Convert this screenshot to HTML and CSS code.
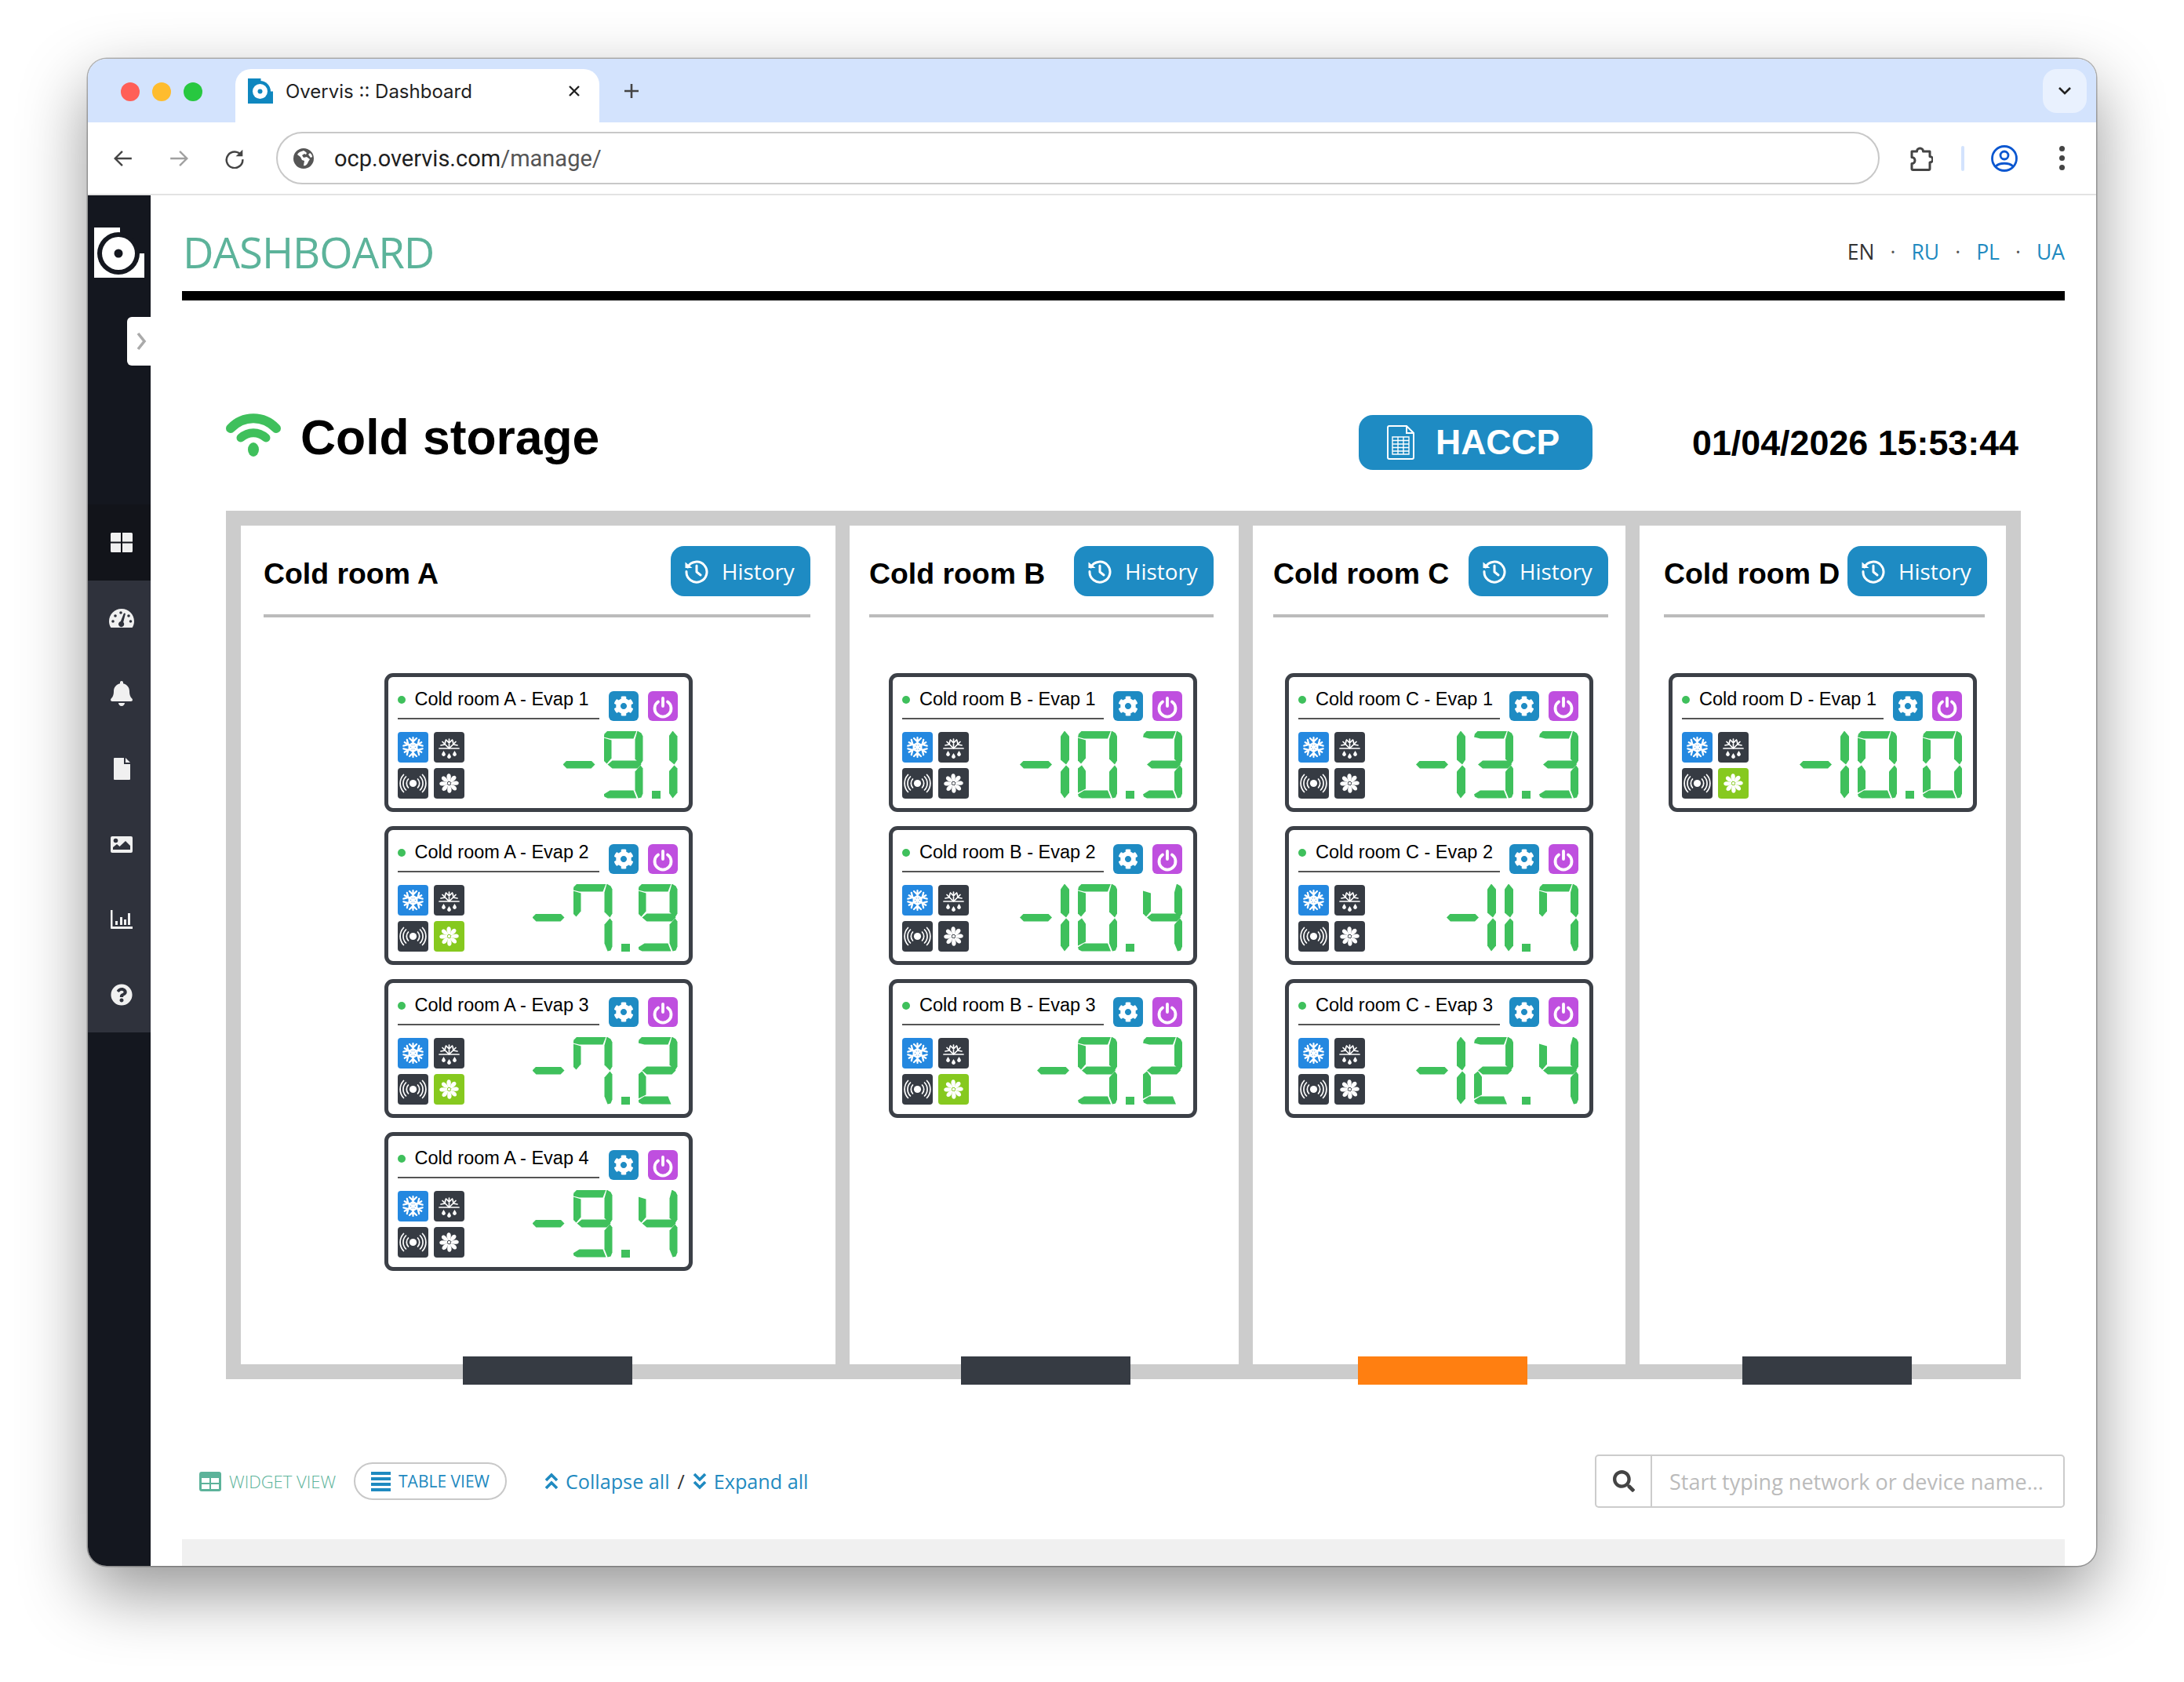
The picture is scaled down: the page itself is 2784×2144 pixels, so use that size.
FILE: index.html
```html
<!DOCTYPE html>
<html lang="en">
<head>
<meta charset="utf-8">
<title>Overvis :: Dashboard</title>
<link rel="stylesheet" href="styles.css">
</head>
<body>
<svg class="defs" aria-hidden="true">
  <symbol id="snow" viewBox="0 0 39 39">
    <g fill="none" stroke="#fff" stroke-width="2.2" stroke-linecap="round">
      <g id="arm"><path d="M19.5 19.5V7M15 8l4.5 4.5L24 8M16 16.5l3.5-3M23 16.5l-3.5-3"/></g>
      <use href="#arm" transform="rotate(60 19.5 19.5)"/><use href="#arm" transform="rotate(120 19.5 19.5)"/><use href="#arm" transform="rotate(180 19.5 19.5)"/><use href="#arm" transform="rotate(240 19.5 19.5)"/><use href="#arm" transform="rotate(300 19.5 19.5)"/>
    </g>
  </symbol>
  <symbol id="defrost" viewBox="0 0 39 39">
    <g fill="none" stroke="#fff" stroke-width="1.7" stroke-linecap="round">
      <path d="M7 21H32M19.5 21V9M15.5 10l4 4 4-4"/>
      <path d="M19.5 21L11 12.5M9 17l5-1 1-5M19.5 21L28 12.5M30 17l-5-1-1-5"/>
    </g>
    <g fill="#fff"><path d="M12.5 24l2 3.2a2.4 2.4 0 1 1-4 0zM19.5 27l2 3.2a2.4 2.4 0 1 1-4 0zM26.5 24l2 3.2a2.4 2.4 0 1 1-4 0z"/></g>
  </symbol>
  <symbol id="signal" viewBox="0 0 39 39">
    <circle cx="19.5" cy="19.5" r="4.6" fill="#fff"/>
    <g fill="none" stroke="#fff" stroke-width="1.7" stroke-linecap="round">
      <path d="M13.5 14a8 8 0 0 0 0 11M25.500 14a8 8 0 0 1 0 11M10.500 11a12 12 0 0 0 0 17M28.500 11a12 12 0 0 1 0 17M7.500 8.500a16 16 0 0 0 0 22M31.500 8.500a16 16 0 0 1 0 22"/>
    </g>
  </symbol>
  <symbol id="fan" viewBox="0 0 39 39">
    <g fill="#fff">
      <path id="blade" d="M19 17C16 14 15.500 9 18 7.500C21 6.500 23 9 21 17z"/>
      <use href="#blade" transform="rotate(45 19.500 19.500)"/><use href="#blade" transform="rotate(90 19.500 19.500)"/><use href="#blade" transform="rotate(135 19.500 19.500)"/><use href="#blade" transform="rotate(180 19.500 19.500)"/><use href="#blade" transform="rotate(225 19.500 19.500)"/><use href="#blade" transform="rotate(270 19.500 19.500)"/><use href="#blade" transform="rotate(315 19.500 19.500)"/>
      <circle cx="19.500" cy="19.500" r="1.800"/>
    </g>
  </symbol>
  <symbol id="cog" viewBox="0 0 512 512">
    <path fill="#fff" d="M487.4 315.7l-42.6-24.6c4.3-23.2 4.3-47 0-70.2l42.6-24.6c4.900-2.800 7.100-8.600 5.500-14-11.100-35.600-30-67.800-54.700-94.600-3.800-4.100-10-5.100-14.800-2.300L380.800 110c-17.900-15.400-38.500-27.300-60.800-35.100V25.800c0-5.600-3.900-10.500-9.400-11.700-36.700-8.200-74.300-7.800-109.200 0-5.500 1.200-9.400 6.100-9.400 11.700V75c-22.200 7.900-42.800 19.800-60.800 35.100L88.700 85.500c-4.900-2.800-11-1.900-14.800 2.300-24.700 26.700-43.600 58.900-54.700 94.600-1.700 5.400.6 11.200 5.500 14L67.300 221c-4.300 23.200-4.300 47 0 70.200l-42.600 24.600c-4.900 2.800-7.100 8.600-5.500 14 11.100 35.600 30 67.800 54.700 94.600 3.800 4.100 10 5.100 14.800 2.300l42.600-24.600c17.900 15.400 38.500 27.300 60.800 35.100v49.200c0 5.600 3.900 10.500 9.400 11.700 36.700 8.200 74.300 7.800 109.200 0 5.500-1.200 9.400-6.100 9.400-11.700v-49.200c22.200-7.900 42.800-19.800 60.800-35.100l42.600 24.600c4.900 2.800 11 1.900 14.800-2.300 24.700-26.700 43.600-58.900 54.700-94.600 1.500-5.500-.7-11.300-5.600-14.100zM256 336c-44.100 0-80-35.900-80-80s35.900-80 80-80 80 35.900 80 80-35.900 80-80 80z"/>
  </symbol>
  <symbol id="power" viewBox="0 0 38 38">
    <g fill="none" stroke="#fff" stroke-width="3.800" stroke-linecap="round"><path d="M13 13.500a10.500 10.500 0 1 0 12 0M19 9v10"/></g>
  </symbol>
  <symbol id="history" viewBox="0 0 32 32">
    <g fill="none" stroke="#fff" stroke-width="3" stroke-linecap="round" stroke-linejoin="round"><path d="M4.500 11A13 13 0 1 1 3 16.500"/><path d="M16 9v8l5 4"/></g>
    <path fill="#fff" d="M1.500 4.500L10.500 12H1.500z"/>
  </symbol>
</svg>

<div class="window">
  <div class="tabstrip">
    <div class="lights"><span class="light red"></span><span class="light amber"></span><span class="light green"></span></div>
    <div class="tab">
      <svg class="favicon" viewBox="0 0 64 64"><rect width="64" height="64" fill="#0f87bf"/><path d="M33 0H64V33H33z" fill="#fff"/><circle cx="31" cy="33" r="27" fill="#0f87bf"/><circle cx="31" cy="33" r="19" fill="#fff"/><circle cx="31" cy="33" r="6" fill="#0f87bf"/></svg>
      <span class="tab-title">Overvis :: Dashboard</span>
      <svg class="tab-close" viewBox="0 0 16 16"><path d="M2 2l12 12M14 2L2 14" stroke="#222" stroke-width="2.400" fill="none"/></svg>
    </div>
    <svg class="new-tab" viewBox="0 0 20 20"><path d="M10 1v18M1 10h18" stroke="#444" stroke-width="2.600" fill="none"/></svg>
    <div class="tab-menu"><svg viewBox="0 0 18 12"><path d="M2 2l7 7 7-7" stroke="#222" stroke-width="2.600" fill="none"/></svg></div>
  </div>
  <div class="toolbar">
    <svg class="tool" viewBox="0 0 24 24"><path d="M22 12H3M11 3.500L2.500 12l8.500 8.500" stroke="#444" stroke-width="2.200" fill="none"/></svg>
    <svg class="tool" viewBox="0 0 24 24"><path d="M2 12h19M13 3.500l8.500 8.500-8.500 8.500" stroke="#a0a0a0" stroke-width="2.200" fill="none"/></svg>
    <svg class="tool" viewBox="0 0 24 24"><path d="M20 8.500A9.500 9.500 0 1 0 21.500 13" stroke="#444" stroke-width="2.300" fill="none"/><path d="M21.500 1.500v8h-8z" fill="#444"/></svg>
    <div class="omnibox">
      <svg class="globe" viewBox="0 0 26 26"><circle cx="13" cy="13" r="13" fill="#555"/><path d="M13 3c-2 1-6 1-8 5l4 3 2 4 3 1-1 6c3 1 5-2 6-5l2-3-4-3-4 1-2-3 3-2 2 1 1-2c-1-1-2-2-4-3zM21 6l-2 2 3 4 2-1c0-2-1-4-3-5z" fill="#fff"/></svg>
      <span class="url"><span class="url-host">ocp.overvis.com</span>/manage/</span>
    </div>
    <svg class="puzzle" viewBox="0 0 30 34"><path d="M3 8H9.500a4 4 0 0 1 8 0H26V14.500a3.500 3.500 0 0 1 0 7.500V30a1.500 1.500 0 0 1-1.500 1.500H4.500A1.500 1.500 0 0 1 3 30V23.500a4 4 0 0 0 0-8z" stroke="#444" stroke-width="3" fill="none" stroke-linejoin="round"/></svg>
    <span class="tool-sep"></span>
    <svg class="avatar" viewBox="0 0 34 36"><circle cx="17" cy="18" r="15.500" fill="none" stroke="#0b57d0" stroke-width="2.800"/><circle cx="17" cy="14" r="5" fill="none" stroke="#0b57d0" stroke-width="2.800"/><path d="M6 28c5-5 17-5 22 0" fill="none" stroke="#0b57d0" stroke-width="2.800"/></svg>
    <span class="kebab"><i></i><i></i><i></i></span>
  </div>

  <div class="app">
    <aside class="sidebar">
      <svg class="logo" viewBox="0 0 64 64"><rect width="64" height="64" fill="#fff"/><path d="M33 0H64V33H33z" fill="#14171f"/><path d="M33 0a6 6 0 0 0 0 6l-4 0V0z" fill="#fff"/><circle cx="31" cy="33" r="27" fill="#14171f"/><circle cx="31" cy="33" r="21" fill="#fff"/><circle cx="31" cy="33" r="5.500" fill="#14171f"/></svg>
      <div class="collapse-tab"><svg viewBox="0 0 14 24"><path d="M3 2l8 10-8 10" fill="none" stroke="#aaa" stroke-width="3.600"/></svg></div>
      <nav class="nav">
        <a class="nav-item active"><svg viewBox="0 0 28 25" width="28" height="25"><path d="M0 1.500A1.500 1.500 0 0 1 1.500 0H13v11.500H0zM15 0h11.500A1.500 1.500 0 0 1 28 1.500v10H15zM0 13.500h13V25H1.500A1.500 1.500 0 0 1 0 23.500zM15 13.500h13v10a1.500 1.500 0 0 1-1.500 1.500H15z"/></svg></a>
        <a class="nav-item"><svg viewBox="0 0 32 24" width="32" height="24"><path d="M16 0C7 0 0 7 0 16c0 2.800.8 5.300 2 7.400.3.400.8.600 1.300.600h25.400c.5 0 1-.2 1.300-.6 1.200-2.100 2-4.600 2-7.400C32 7 25 0 16 0z"/><g fill="#2f323c"><circle cx="5" cy="16" r="1.800"/><circle cx="8" cy="9" r="1.800"/><circle cx="15" cy="5" r="1.800"/><circle cx="25" cy="9" r="1.800"/><circle cx="27.500" cy="16" r="1.800"/><path d="M19 5.500l2 .6-2.800 11a3.600 3.600 0 1 1-3.400-1z"/></g></svg></a>
        <a class="nav-item"><svg viewBox="0 0 448 512" width="28" height="32"><path d="M224 512c35.320 0 63.970-28.650 63.970-64H160.030c0 35.350 28.650 64 63.970 64zm215.390-149.710c-19.320-20.760-55.470-51.990-55.470-154.290 0-77.700-54.480-139.900-127.940-155.160V32c0-17.670-14.320-32-31.980-32s-31.980 14.330-31.980 32v20.840C118.560 68.100 64.080 130.300 64.080 208c0 102.300-36.150 133.530-55.470 154.290-6 6.450-8.660 14.160-8.610 21.710.11 16.400 12.980 32 32.100 32h383.800c19.120 0 32-15.600 32.100-32 .05-7.550-2.610-15.270-8.610-21.710z"/></svg></a>
        <a class="nav-item"><svg viewBox="0 0 21 28" width="21" height="28"><path d="M1 0H13V8H21V27a1 1 0 0 1-1 1H1a1 1 0 0 1-1-1V1a1 1 0 0 1 1-1z"/><path d="M15 0l6 6h-6z"/></svg></a>
        <a class="nav-item"><svg viewBox="0 0 28 21" width="28" height="21"><path d="M2 0H26a2 2 0 0 1 2 2V19a2 2 0 0 1-2 2H2a2 2 0 0 1-2-2V2a2 2 0 0 1 2-2z"/><g fill="#2f323c"><circle cx="6.500" cy="5.500" r="2.800"/><path d="M3 17v-3l5-4 3.500 3L19 6l6 6v5z"/></g></svg></a>
        <a class="nav-item"><svg viewBox="0 0 28 24" width="28" height="24"><path d="M0 0H2.500V21H28V24H1a1 1 0 0 1-1-1z"/><path d="M6 14h3v5H6zM12 9h3v10h-3zM17 12h3v7h-3zM22 4h3v15h-3z"/></svg></a>
        <a class="nav-item"><svg viewBox="0 0 512 512" width="28" height="28"><path d="M504 256c0 136.997-111.043 248-248 248S8 392.997 8 256C8 119.083 119.043 8 256 8s248 111.083 248 248zM262.655 90c-54.497 0-89.255 22.957-116.549 63.758-3.536 5.286-2.353 12.415 2.715 16.258l34.699 26.310c5.205 3.947 12.621 3.008 16.665-2.122 17.864-22.658 30.113-35.797 57.303-35.797 20.429 0 45.698 13.148 45.698 32.958 0 14.976-12.363 22.667-32.534 33.976C247.128 238.528 216 254.941 216 296v4c0 6.627 5.373 12 12 12h56c6.627 0 12-5.373 12-12v-1.333c0-28.462 83.186-29.647 83.186-106.667 0-58.002-60.165-102-116.531-102zM256 338c-25.365 0-46 20.635-46 46 0 25.364 20.635 46 46 46s46-20.636 46-46c0-25.365-20.635-46-46-46z"/></svg></a>
      </nav>
    </aside>

    <main class="main">
      <header class="page-head">
        <h1 class="page-title">DASHBOARD</h1>
        <div class="langs"><span>EN</span><span class="sep">·</span><a>RU</a><span class="sep">·</span><a>PL</a><span class="sep">·</span><a>UA</a></div>
      </header>

      <section class="site">
        <div class="site-head">
          <svg class="wifi" viewBox="0 0 70 56"><g fill="none" stroke="#3fc05c" stroke-linecap="round"><path d="M6 20C22 3 48 3 64 20" stroke-width="12"/><path d="M19 32c9.500-8.500 22.500-8.500 32 0" stroke-width="11"/></g><ellipse cx="35" cy="47" rx="7" ry="9" fill="#3fc05c"/></svg>
          <h2 class="site-title">Cold storage</h2>
          <a class="haccp"><svg viewBox="0 0 35 44" width="35" height="44"><g fill="none" stroke="#fff"><path stroke-width="2" d="M3 1H25L34 10V41a2 2 0 0 1-2 2H3a2 2 0 0 1-2-2V3a2 2 0 0 1 2-2zM25 1V10H34"/><path stroke-width="1.400" d="M7 15H28V37H7zM7 19.500H28M7 24H28M7 28.500H28M7 33H28M14 15V37M21 15V37"/></g></svg>HACCP</a>
          <div class="clock">01/04/2026 15:53:44</div>
        </div>

        <div class="rooms">
          <article class="room room-a">
            <div class="room-head"><h3>Cold room A</h3><a class="history"><svg><use href="#history"/></svg>History</a></div>
            <div class="devices">
              <div class="device"><div class="device-head"><div class="device-name"><i class="dot"></i>Cold room A - Evap 1</div><a class="mini blue"><svg class="cog"><use href="#cog"/></svg></a><a class="mini violet"><svg><use href="#power"/></svg></a></div><div class="device-body"><div class="tiles"><span class="tile on"><svg><use href="#snow"/></svg></span><span class="tile"><svg><use href="#defrost"/></svg></span><span class="tile"><svg><use href="#signal"/></svg></span><span class="tile"><svg><use href="#fan"/></svg></span></div><div class="temp">-9.1</div></div></div>
              <div class="device"><div class="device-head"><div class="device-name"><i class="dot"></i>Cold room A - Evap 2</div><a class="mini blue"><svg class="cog"><use href="#cog"/></svg></a><a class="mini violet"><svg><use href="#power"/></svg></a></div><div class="device-body"><div class="tiles"><span class="tile on"><svg><use href="#snow"/></svg></span><span class="tile"><svg><use href="#defrost"/></svg></span><span class="tile"><svg><use href="#signal"/></svg></span><span class="tile fan-on"><svg><use href="#fan"/></svg></span></div><div class="temp">-7.9</div></div></div>
              <div class="device"><div class="device-head"><div class="device-name"><i class="dot"></i>Cold room A - Evap 3</div><a class="mini blue"><svg class="cog"><use href="#cog"/></svg></a><a class="mini violet"><svg><use href="#power"/></svg></a></div><div class="device-body"><div class="tiles"><span class="tile on"><svg><use href="#snow"/></svg></span><span class="tile"><svg><use href="#defrost"/></svg></span><span class="tile"><svg><use href="#signal"/></svg></span><span class="tile fan-on"><svg><use href="#fan"/></svg></span></div><div class="temp">-7.2</div></div></div>
              <div class="device"><div class="device-head"><div class="device-name"><i class="dot"></i>Cold room A - Evap 4</div><a class="mini blue"><svg class="cog"><use href="#cog"/></svg></a><a class="mini violet"><svg><use href="#power"/></svg></a></div><div class="device-body"><div class="tiles"><span class="tile on"><svg><use href="#snow"/></svg></span><span class="tile"><svg><use href="#defrost"/></svg></span><span class="tile"><svg><use href="#signal"/></svg></span><span class="tile"><svg><use href="#fan"/></svg></span></div><div class="temp">-9.4</div></div></div>
            </div>
            <span class="room-tab"></span>
          </article>
          <article class="room room-b">
            <div class="room-head"><h3>Cold room B</h3><a class="history"><svg><use href="#history"/></svg>History</a></div>
            <div class="devices">
              <div class="device"><div class="device-head"><div class="device-name"><i class="dot"></i>Cold room B - Evap 1</div><a class="mini blue"><svg class="cog"><use href="#cog"/></svg></a><a class="mini violet"><svg><use href="#power"/></svg></a></div><div class="device-body"><div class="tiles"><span class="tile on"><svg><use href="#snow"/></svg></span><span class="tile"><svg><use href="#defrost"/></svg></span><span class="tile"><svg><use href="#signal"/></svg></span><span class="tile"><svg><use href="#fan"/></svg></span></div><div class="temp">-10.3</div></div></div>
              <div class="device"><div class="device-head"><div class="device-name"><i class="dot"></i>Cold room B - Evap 2</div><a class="mini blue"><svg class="cog"><use href="#cog"/></svg></a><a class="mini violet"><svg><use href="#power"/></svg></a></div><div class="device-body"><div class="tiles"><span class="tile on"><svg><use href="#snow"/></svg></span><span class="tile"><svg><use href="#defrost"/></svg></span><span class="tile"><svg><use href="#signal"/></svg></span><span class="tile"><svg><use href="#fan"/></svg></span></div><div class="temp">-10.4</div></div></div>
              <div class="device"><div class="device-head"><div class="device-name"><i class="dot"></i>Cold room B - Evap 3</div><a class="mini blue"><svg class="cog"><use href="#cog"/></svg></a><a class="mini violet"><svg><use href="#power"/></svg></a></div><div class="device-body"><div class="tiles"><span class="tile on"><svg><use href="#snow"/></svg></span><span class="tile"><svg><use href="#defrost"/></svg></span><span class="tile"><svg><use href="#signal"/></svg></span><span class="tile fan-on"><svg><use href="#fan"/></svg></span></div><div class="temp">-9.2</div></div></div>
            </div>
            <span class="room-tab"></span>
          </article>
          <article class="room room-c">
            <div class="room-head"><h3>Cold room C</h3><a class="history"><svg><use href="#history"/></svg>History</a></div>
            <div class="devices">
              <div class="device"><div class="device-head"><div class="device-name"><i class="dot"></i>Cold room C - Evap 1</div><a class="mini blue"><svg class="cog"><use href="#cog"/></svg></a><a class="mini violet"><svg><use href="#power"/></svg></a></div><div class="device-body"><div class="tiles"><span class="tile on"><svg><use href="#snow"/></svg></span><span class="tile"><svg><use href="#defrost"/></svg></span><span class="tile"><svg><use href="#signal"/></svg></span><span class="tile"><svg><use href="#fan"/></svg></span></div><div class="temp">-13.3</div></div></div>
              <div class="device"><div class="device-head"><div class="device-name"><i class="dot"></i>Cold room C - Evap 2</div><a class="mini blue"><svg class="cog"><use href="#cog"/></svg></a><a class="mini violet"><svg><use href="#power"/></svg></a></div><div class="device-body"><div class="tiles"><span class="tile on"><svg><use href="#snow"/></svg></span><span class="tile"><svg><use href="#defrost"/></svg></span><span class="tile"><svg><use href="#signal"/></svg></span><span class="tile"><svg><use href="#fan"/></svg></span></div><div class="temp">-11.7</div></div></div>
              <div class="device"><div class="device-head"><div class="device-name"><i class="dot"></i>Cold room C - Evap 3</div><a class="mini blue"><svg class="cog"><use href="#cog"/></svg></a><a class="mini violet"><svg><use href="#power"/></svg></a></div><div class="device-body"><div class="tiles"><span class="tile on"><svg><use href="#snow"/></svg></span><span class="tile"><svg><use href="#defrost"/></svg></span><span class="tile"><svg><use href="#signal"/></svg></span><span class="tile"><svg><use href="#fan"/></svg></span></div><div class="temp">-12.4</div></div></div>
            </div>
            <span class="room-tab alert"></span>
          </article>
          <article class="room room-d">
            <div class="room-head"><h3>Cold room D</h3><a class="history"><svg><use href="#history"/></svg>History</a></div>
            <div class="devices">
              <div class="device"><div class="device-head"><div class="device-name"><i class="dot"></i>Cold room D - Evap 1</div><a class="mini blue"><svg class="cog"><use href="#cog"/></svg></a><a class="mini violet"><svg><use href="#power"/></svg></a></div><div class="device-body"><div class="tiles"><span class="tile on"><svg><use href="#snow"/></svg></span><span class="tile"><svg><use href="#defrost"/></svg></span><span class="tile"><svg><use href="#signal"/></svg></span><span class="tile fan-on"><svg><use href="#fan"/></svg></span></div><div class="temp">-10.0</div></div></div>
            </div>
            <span class="room-tab"></span>
          </article>
        </div>
      </section>

      <div class="view-bar">
        <a class="view widget"><svg viewBox="0 0 28 25" width="28" height="25"><rect width="28" height="25" rx="3" fill="#5cb39a"/><path d="M3 8h10v6H3zM15 8h10v6H15zM3 16h10v6H3zM15 16h10v6H15z" fill="#fff"/></svg>WIDGET VIEW</a>
        <a class="view table"><svg viewBox="0 0 25 25" width="25" height="25"><path d="M0 0h25v4H0zM0 7h25v4H0zM0 14h25v4H0zM0 21h25v4H0z" fill="#1f8ac0"/></svg>TABLE VIEW</a>
        <div class="tree">
          <svg viewBox="0 0 18 24" width="18" height="24"><path d="M2 11l7-7 7 7M2 21l7-7 7 7" fill="none" stroke="#1f8ac0" stroke-width="3.600"/></svg><a>Collapse all</a>
          <span class="slash">/</span>
          <svg viewBox="0 0 18 24" width="18" height="24"><path d="M2 3l7 7 7-7M2 13l7 7 7-7" fill="none" stroke="#1f8ac0" stroke-width="3.600"/></svg><a>Expand all</a>
        </div>
        <div class="search">
          <span class="search-btn"><svg viewBox="0 0 512 512" width="28" height="28"><path fill="#444" d="M505 442.700L405.300 343c-4.500-4.500-10.600-7-17-7H372c27.600-35.300 44-79.700 44-128C416 93.100 322.900 0 208 0S0 93.100 0 208s93.100 208 208 208c48.300 0 92.700-16.400 128-44v16.300c0 6.400 2.500 12.500 7 17l99.700 99.700c9.400 9.400 24.600 9.400 33.900 0l28.300-28.300c9.400-9.400 9.400-24.600.1-34zM208 336c-70.700 0-128-57.200-128-128 0-70.700 57.200-128 128-128 70.700 0 128 57.200 128 128 0 70.700-57.200 128-128 128z"/></svg></span>
          <span class="search-text">Start typing network or device name...</span>
        </div>
      </div>
      <div class="footer-strip"></div>
    </main>
  </div>
</div>
<script src="script.js"></script>
</body>
</html>
```

FILE: styles.css
```css
* { box-sizing: border-box; }
html, body { margin: 0; background: #fff; }
body { width: 2784px; height: 2144px; padding: 75px 112px 148px; overflow: hidden; font-family: "Liberation Sans", Arial, sans-serif; color: #000; }
h1, h2, h3 { margin: 0; }
a { text-decoration: none; color: inherit; }
.defs { width: 0; height: 0; display: block; overflow: hidden; }

.window { width: 2560px; height: 1921px; display: flex; flex-direction: column; border-radius: 24px; overflow: hidden; background: #fff; box-shadow: 0 0 0 1.500px rgba(0,0,0,.28), 0 34px 85px rgba(0,0,0,.42); }

.tabstrip { height: 81px; flex: none; background: #d3e3fd; display: flex; align-items: flex-start; padding-top: 13px; }
.lights { display: flex; gap: 16px; padding: 17px 0 0 42px; width: 188px; }
.light { width: 24px; height: 24px; border-radius: 50%; }
.red { background: #ff5f57; } .amber { background: #febc2e; } .green { background: #28c840; }
.tab { width: 464px; height: 68px; background: #fff; border-radius: 20px 20px 0 0; display: flex; align-items: center; padding: 0 0 12px 16px; font-family: Inter, Roboto, sans-serif; font-size: 24px; color: #1f1f1f; }
.favicon { width: 32px; height: 32px; flex: none; }
.tab-title { margin-left: 16px; flex: 1; white-space: nowrap; }
.tab-close { width: 16px; height: 16px; margin-right: 24px; }
.new-tab { width: 20px; height: 20px; margin: 18px 0 0 31px; }
.tab-menu { margin: 0 12px 0 auto; width: 56px; height: 56px; border-radius: 18px; background: #e9f1fe; display: flex; align-items: center; justify-content: center; }
.tab-menu svg { width: 18px; height: 12px; }

.toolbar { height: 93px; flex: none; display: flex; align-items: center; border-bottom: 2px solid #e3e3e3; padding: 0 0 0 32px; background: #fff; }
.tool { width: 26px; height: 26px; margin-right: 45px; }
.tool:nth-of-type(3) { margin-right: 40px; }
.omnibox { width: 2044px; height: 67px; border: 2px solid #c8c8c8; border-radius: 34px; display: flex; align-items: center; padding-left: 20px; font-family: Roboto, sans-serif; font-size: 29px; color: #555; }
.globe { width: 26px; height: 26px; }
.url { margin-left: 26px; }
.url-host { color: #1f1f1f; }
.puzzle { width: 30px; height: 34px; margin-left: 38px; }
.tool-sep { width: 4px; height: 32px; border-radius: 2px; background: #d3e3fd; margin-left: 36px; }
.avatar { width: 34px; height: 36px; margin-left: 34px; }
.kebab { margin-left: 53px; display: flex; flex-direction: column; gap: 5px; }
.kebab i { display: block; width: 7px; height: 7px; border-radius: 50%; background: #444; }

.app { flex: 1; display: flex; min-height: 0; }
.sidebar { width: 80px; flex: none; background: #14171f; position: relative; display: flex; flex-direction: column; }
.logo { width: 64px; height: 64px; margin: 41px 0 0 8px; flex: none; }
.collapse-tab { position: absolute; left: 50px; top: 155px; width: 30px; height: 62px; background: #fff; border-radius: 6px 0 0 6px; display: flex; align-items: center; justify-content: flex-end; padding-right: 5px; }
.collapse-tab svg { width: 14px; height: 24px; }
.nav { margin-top: 289px; display: flex; flex-direction: column; background: #2f323c; }
.nav-item { height: 96px; display: flex; align-items: center; justify-content: center; padding-left: 6px; }
.nav-item svg { fill: #f0f0f0; }
.nav-item.active { height: 97px; background: #12141a; }

.main { flex: 1; min-width: 0; padding: 0 40px; display: flex; flex-direction: column; }
.page-head { height: 134px; flex: none; border-bottom: 12px solid #000; display: flex; align-items: center; justify-content: space-between; font-family: "Open Sans", sans-serif; padding: 22px 0 0 1px; }
.page-title { font-size: 54.500px; font-weight: 400; letter-spacing: -1px; color: #5cb39a; line-height: 1; }
.langs { display: flex; gap: 20px; font-size: 26.500px; color: #333; }
.langs a { color: #1f8ac0; }
.langs .sep { color: #555; }

.site { margin: 0 56px; flex: none; }
.site-head { height: 80px; margin-top: 137px; display: flex; align-items: center; }
.wifi { width: 70px; height: 56px; flex: none; margin-bottom: 12px; }
.site-title { font-size: 62.400px; font-weight: 700; margin-left: 25px; line-height: 1; margin-bottom: 4px; white-space: nowrap; }
.haccp { margin-left: auto; width: 298px; height: 70px; border-radius: 18px; background: #1e8bc3; color: #fff; font-weight: 700; font-size: 44.500px; display: flex; align-items: center; gap: 27px; padding-left: 36px; margin-top: 8px; }
.clock { width: 419px; margin-left: 127px; font-size: 44.800px; font-weight: 700; margin-top: 8px; white-space: nowrap; }

.rooms { margin-top: 51px; height: 1107px; background: #ccc; padding: 19px; display: grid; grid-template-columns: 758px 496px 475px 467px; gap: 18px; }
.room { background: #fff; position: relative; }
.room-head { display: flex; justify-content: space-between; align-items: center; padding: 26px 0 23px; border-bottom: 4px solid #bbb; }
.room-a .room-head { margin: 0 32px 0 29px; }
.room-b .room-head { margin: 0 32px 0 25px; }
.room-c .room-head { margin: 0 22px 0 26px; }
.room-d .room-head { margin: 0 27px 0 31px; }
.room-d .history { margin-right: -3px; }
.room-head h3 { font-size: 37.400px; font-weight: 700; line-height: 1; padding-top: 7px; white-space: nowrap; }
.history { width: 178px; height: 64px; border-radius: 17px; background: #1e8bc3; color: #fff; display: flex; align-items: center; padding-left: 17px; gap: 16px; font-family: "Open Sans", sans-serif; font-size: 27.800px; }
.history svg { width: 32px; height: 32px; flex: none; }
.devices { margin-top: 71px; display: flex; flex-direction: column; align-items: center; gap: 18px; }
.room-b .devices { padding-right: 3px; }
.room-tab { position: absolute; bottom: -26px; width: 216px; height: 36px; background: #363b43; }
.room-a .room-tab { left: 283px; }
.room-b .room-tab { left: 142px; }
.room-c .room-tab { left: 134px; }
.room-d .room-tab { left: 131px; }
.room-tab.alert { background: #ff7f11; }

.device { width: 393px; height: 177px; border: 5.500px solid #3c4047; border-radius: 11px; padding: 0 14px 0 12px; background: #fff; }
.device-head { display: flex; align-items: flex-end; padding-top: 17px; }
.device-name { flex: 1; display: flex; align-items: center; gap: 12px; font-size: 23.500px; line-height: 1; white-space: nowrap; padding-bottom: 11px; margin-bottom: 2px; border-bottom: 2px solid #555; }
.dot { width: 10px; height: 10px; border-radius: 50%; background: #3fc05c; }
.mini { width: 38px; height: 38px; border-radius: 6px; margin-left: 12px; display: flex; align-items: center; justify-content: center; flex: none; }
.mini svg { width: 38px; height: 38px; }
.mini svg.cog { width: 26px; height: 26px; }
.blue { background: #1e8bc3; }
.violet { background: #bf4fdf; }
.device-body { display: flex; justify-content: space-between; margin-top: 14px; }
.tiles { display: grid; grid-template-columns: 39px 39px; grid-auto-rows: 39px; gap: 7px; }
.tile { background: #363b43; border-radius: 4px; display: flex; }
.tile svg { width: 39px; height: 39px; }
.tile.on { background: #2488e0; }
.tile.fan-on { background: #86c91f; }

.temp { display: flex; gap: 11px; margin-top: -1px; height: 86px; position: relative; }
.reading { position: absolute; top: 0; right: 0; font-size: 72px; line-height: 86px; color: transparent; white-space: nowrap; }
.digit { width: 50px; height: 86px; display: grid; }
.digit i { grid-area: 1 / 1; background: #3fc05c; }
.digit.one { width: 11px; }
.minus { width: 41px; height: 10px; align-self: center; background: #3fc05c; clip-path: polygon(0 50%, 12% 0, 88% 0, 100% 50%, 88% 100%, 12% 100%); }
.point { width: 11px; height: 10px; align-self: flex-end; background: #3fc05c; }
.seg-a { clip-path: polygon(5px 0, 42px 0, 38px 10px, 8px 10px, 0 8px, 1px 4px); }
.seg-b { clip-path: polygon(43px 0, 48px 3px, 50px 7px, 50px 38px, 47px 43px, 40px 36px, 40px 11px); }
.seg-c { clip-path: polygon(47px 44px, 50px 48px, 50px 80px, 48px 85px, 44px 86px, 40px 76px, 40px 52px); }
.seg-d { clip-path: polygon(0 81px, 8px 76px, 38px 76px, 42px 86px, 5px 86px, 1px 84px); }
.seg-e { clip-path: polygon(0 48px, 5px 44px, 10px 51px, 10px 74px, 0 79px); }
.seg-f { clip-path: polygon(0 9px, 10px 12px, 10px 35px, 4px 42px, 0 38px); }
.seg-g { clip-path: polygon(5px 43px, 11px 38px, 44px 38px, 48px 43px, 43px 48px, 11px 48px); }
.seg-u { clip-path: polygon(5px 0, 11px 7px, 11px 37px, 7px 43px, 0 37px, 0 7px); }
.seg-l { clip-path: polygon(7px 44px, 11px 48px, 11px 79px, 5px 86px, 0 79px, 0 52px); }

.view-bar { height: 68px; margin-top: 96px; flex: none; display: flex; align-items: center; padding-left: 22px; font-family: "Open Sans", sans-serif; }
.view { display: flex; align-items: center; gap: 10px; font-size: 22px; font-weight: 300; white-space: nowrap; }
.view.widget { color: #5cb39a; }
.view.table { color: #1f8ac0; margin-left: 23px; height: 48px; border: 2px solid #c8c8c8; border-radius: 24px; padding: 0 20px; font-weight: 400; font-size: 21px; }
.tree { display: flex; align-items: center; margin-left: 48px; font-size: 25.200px; color: #1f8ac0; }
.tree a { margin-left: 9px; }
.slash { color: #333; margin: 0 10px; }
.search { margin-left: auto; width: 599px; height: 68px; border: 2px solid #ccc; border-radius: 5px; display: flex; align-items: center; font-size: 27px; color: #bbb; }
.search-btn { width: 71px; height: 100%; border-right: 2px solid #ccc; display: flex; align-items: center; justify-content: center; flex: none; }
.search-text { margin-left: 22px; white-space: nowrap; }
.footer-strip { margin-top: 40px; flex: 1; background: #f0f0f0; }
```

FILE: script.js
```js
// Builds the seven-segment read-outs from the temperature text of each device.
var SEGMENTS = { '0': 'abcdef', '2': 'abged', '3': 'abgcd', '4': 'fgbc', '5': 'afgcd', '6': 'afgedc', '7': 'abcf', '8': 'abcdefg', '9': 'abcdfg' };

function part(className) {
  var el = document.createElement('span');
  el.className = className;
  return el;
}

document.querySelectorAll('.temp').forEach(function (temp) {
  var value = temp.textContent;
  temp.textContent = '';
  value.split('').forEach(function (ch) {
    if (ch === '-') { temp.appendChild(part('minus')); return; }
    if (ch === '.') { temp.appendChild(part('point')); return; }
    var digit = part(ch === '1' ? 'digit one' : 'digit');
    (ch === '1' ? 'ul' : SEGMENTS[ch]).split('').forEach(function (s) {
      var seg = document.createElement('i');
      seg.className = 'seg-' + s;
      digit.appendChild(seg);
    });
    temp.appendChild(digit);
  });
  var reading = part('reading');
  reading.textContent = value;
  temp.appendChild(reading);
});
```
